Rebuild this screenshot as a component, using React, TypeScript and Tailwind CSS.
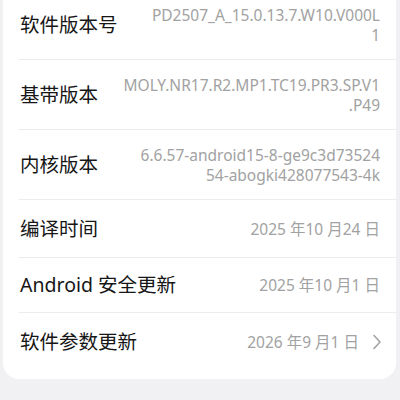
import React from "react";

const rows: { label: string; lines: string[]; h: string; chevron?: boolean }[] = [
  { label: "软件版本号", lines: ["PD2507_A_15.0.13.7.W10.V000L", "1"], h: "h-[70px]" },
  { label: "基带版本", lines: ["MOLY.NR17.R2.MP1.TC19.PR3.SP.V1", ".P49"], h: "h-[70px]" },
  { label: "内核版本", lines: ["6.6.57-android15-8-ge9c3d73524", "54-abogki428077543-4k"], h: "h-[70px]" },
  { label: "编译时间", lines: ["2025 年10 月24 日"], h: "h-[58px]" },
  { label: "Android 安全更新", lines: ["2025 年10 月1 日"], h: "h-[55px]" },
  { label: "软件参数更新", lines: ["2026 年9 月1 日"], h: "h-[57px]", chevron: true },
];

export default function App() {
  return (
    <div
      className="w-[400px] h-[400px] overflow-hidden bg-[#f1f1f3]"
      style={{ fontFamily: '"Noto Sans", "Noto Sans CJK SC", sans-serif' }}
    >
      <div className="-mt-[10px] ml-[3px] mr-[4px] bg-white rounded-b-[16px] pb-[9px]">
        {rows.map((r, i) => (
          <div key={i} className={`${r.h} flex flex-col`}>
            <div className="flex-1 flex items-center justify-between pl-[17px] pr-[16px]">
              <span className="text-[19.5px] text-[#161616] whitespace-nowrap leading-[28px]">{r.label}</span>
              <div className="flex items-center">
                <div className="flex flex-col items-end text-[15.5px] leading-[20px] text-[#a2a2a2] whitespace-nowrap">
                  {r.lines.map((l, j) => (
                    <span key={j}>{l}</span>
                  ))}
                </div>
                {r.chevron && (
                  <svg width="10" height="16" viewBox="0 0 10 16" className="ml-[13px] -mr-[2px]">
                    <path d="M2 1.5 L8 8 L2 14.5" fill="none" stroke="#a2a2a2" strokeWidth="1.6" strokeLinecap="round" strokeLinejoin="round" />
                  </svg>
                )}
              </div>
            </div>
            {i < rows.length - 1 && <div className="h-px bg-[#ececec] ml-[16px]" />}
          </div>
        ))}
      </div>
    </div>
  );
}
